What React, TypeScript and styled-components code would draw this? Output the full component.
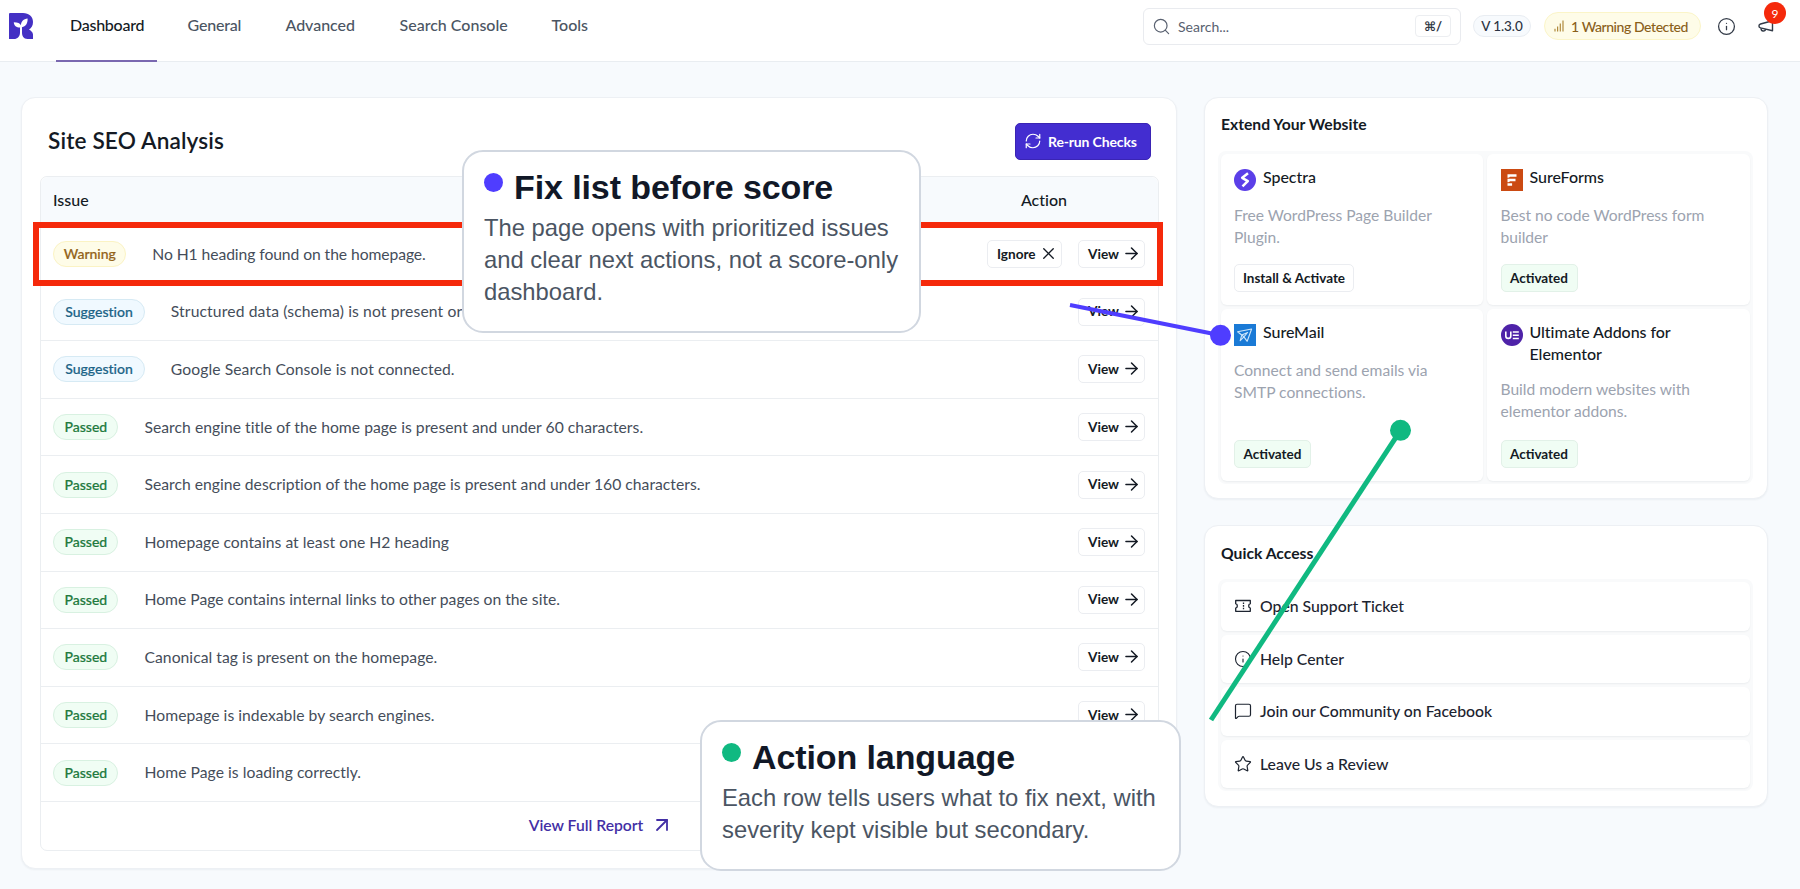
import React from "react";
import styled, { createGlobalStyle, css } from "styled-components";
import { ArrowRight, ArrowUpRight, Info, MessageSquare, RefreshCw, Search, Star, X } from "lucide-react";

const Global = createGlobalStyle`
  * { box-sizing: border-box; }
  body {
    margin: 0;
    background: #f7fafd;
    font-family: Lato, "Liberation Sans", sans-serif;
    font-variant-ligatures: none;
    color: #141a24;
    overflow: hidden;
  }
`;

const Page = styled.div`
  position: relative;
  width: 1800px;
  height: 889px;
  overflow: hidden;
`;

/* ---------- header ---------- */
const Header = styled.header`
  display: flex;
  align-items: flex-start;
  height: 62px;
  padding-left: 9px;
  background: #fff;
  border-bottom: 1px solid #e9edf1;
`;
const Logo = styled.svg`
  width: 24px;
  height: 26px;
  margin-top: 13px;
`;
const Nav = styled.nav`
  display: flex;
  gap: 16.5px;
  margin-left: 23px;
`;
const Tab = styled.a<{ $w: number; $active?: boolean; $track?: number }>`
  width: ${p => p.$w}px;
  height: 62px;
  padding: 14px 0 0 14px;
  white-space: nowrap;
  font-size: 16px;
  font-weight: 500;
  line-height: 22px;
  letter-spacing: ${p => p.$track ?? 0}px;
  color: ${p => (p.$active ? "#141a24" : "#4b5563")};
  border-bottom: 2px solid ${p => (p.$active ? "#7a68b0" : "transparent")};
`;
const Tools = styled.div`
  display: flex;
  align-items: center;
  height: 52px;
  margin-left: auto;
  padding-right: 26px;
`;
const SearchBox = styled.div`
  display: flex;
  align-items: center;
  gap: 7px;
  width: 318px;
  height: 37px;
  padding: 0 9px 0 8px;
  border: 1px solid #e9ebef;
  border-radius: 6px;
  color: #596170;
  font-size: 14px;
`;
const Key = styled.kbd`
  display: grid;
  place-items: center;
  width: 36px;
  height: 22px;
  margin-left: auto;
  border: 1px solid #eceef1;
  border-radius: 4px;
  color: #2f3744;
  font: 700 13px Lato, "DejaVu Sans", sans-serif;
`;
const Version = styled.span`
  display: grid;
  place-items: center;
  width: 58px;
  height: 22px;
  margin-left: 12px;
  border: 1px solid #e9edf2;
  border-radius: 11px;
  background: #f7fafd;
  color: #2b3342;
  font-size: 13.5px;
  font-weight: 500;
  letter-spacing: -0.1px;
`;
const Alert = styled.span`
  display: flex;
  align-items: center;
  width: 157px;
  height: 28px;
  margin-left: 13px;
  padding-left: 9px;
  gap: 7px;
  border: 1px solid #fbf5c8;
  border-radius: 14px;
  background: #fefce8;
  color: #8a601a;
  font-size: 14px;
  font-weight: 500;
  letter-spacing: -0.43px;
  white-space: nowrap;
`;
const HeaderIcon = styled.span<{ $left: number }>`
  position: relative;
  display: flex;
  margin-left: ${p => p.$left}px;
  color: #333b48;
`;
const Count = styled.span`
  position: absolute;
  left: 6px;
  top: -18px;
  display: grid;
  place-items: center;
  width: 22px;
  height: 22px;
  border-radius: 50%;
  background: #f5290b;
  color: #fff;
  font-size: 12px;
`;

/* ---------- layout ---------- */
const Main = styled.main`
  display: grid;
  grid-template-columns: 1156px 564px;
  gap: 26.5px;
  align-items: start;
  padding: 35px 0 0 21px;
`;
const Side = styled.aside`
  display: flex;
  flex-direction: column;
  gap: 26px;
`;
const Card = styled.section`
  background: #fff;
  border: 1px solid #edf0f4;
  border-radius: 14px;
  box-shadow: 0 1px 2px rgba(20, 30, 50, 0.05);
`;
const AnalysisCard = styled(Card)`
  height: 772px;
  padding: 25px 17px 0 18px;
`;
const AnalysisHead = styled.div`
  display: flex;
  align-items: center;
  justify-content: space-between;
  height: 37px;
  padding: 0 8px 0 8px;
`;
const AnalysisTitle = styled.h1`
  margin: -2px 0 0;
  font-size: 22.6px;
  font-weight: 600;
  line-height: 30px;
  letter-spacing: 0.15px;
`;
const PrimaryButton = styled.button`
  display: flex;
  align-items: center;
  gap: 6px;
  width: 136px;
  height: 37px;
  padding: 0 0 1px 8px;
  border: 1px solid #3a24b4;
  border-radius: 5px;
  background: #432dd0;
  color: #fff;
  font: 700 14px Lato, sans-serif;
  letter-spacing: -0.15px;
  white-space: nowrap;
`;
const Table = styled.div`
  margin-top: 16px;
  height: 675px;
  border: 1px solid #ebeef1;
  border-radius: 7px;
`;
const TableHead = styled.div`
  display: flex;
  justify-content: space-between;
  height: 49px;
  padding: 0 91px 0 12px;
  border-radius: 7px 7px 0 0;
  background: #f7fafd;
  font-size: 16px;
  font-weight: 500;
  line-height: 45px;
`;
const Row = styled.div`
  position: relative;
  display: flex;
  align-items: center;
  gap: 26px;
  height: 57.6px;
  padding: 0 13px 0 12.3px;
  border-bottom: 1px solid #ebeef1;
`;
const tones = {
  Warning: css`background: #fefce8; border-color: #fbf3c4; color: #93631a;`,
  Suggestion: css`background: #f0f9ff; border-color: #d6eaf4; color: #1c6487;`,
  Passed: css`background: #f0fdf4; border-color: #d8f1e1; color: #227a3e;`,
};
type Tone = keyof typeof tones;
const toneWidths: Record<Tone, number> = { Warning: 73, Suggestion: 91.5, Passed: 65.2 };
const Badge = styled.span<{ $tone: Tone }>`
  width: ${p => toneWidths[p.$tone]}px;
  height: 26px;
  border: 1px solid;
  border-radius: 13px;
  font-size: 14px;
  font-weight: 500;
  line-height: 23px;
  text-align: center;
  -webkit-text-stroke: 0.2px currentColor;
  ${p => tones[p.$tone]}
`;
const IssueText = styled.span<{ $track?: number }>`
  flex: 1;
  padding-bottom: 1px;
  font-size: 15.7px;
  line-height: 22px;
  letter-spacing: ${p => p.$track ?? 0}px;
  color: #454d5a;
`;
const Actions = styled.div`
  display: flex;
  gap: 16px;
`;
const GhostButton = styled.button<{ $w: number }>`
  display: flex;
  align-items: center;
  justify-content: space-between;
  width: ${p => p.$w}px;
  height: 28px;
  padding: 0 3px 1px 9px;
  border: 1px solid #ebedf1;
  border-radius: 5px;
  background: #fff;
  color: #141a24;
  font: 700 13.6px Lato, sans-serif;
`;
const Highlight = styled.div`
  position: absolute;
  left: -8px;
  right: -5px;
  top: -4px;
  height: 64px;
  border: 6.5px solid #f5290b;
`;
const ReportLink = styled.a`
  display: flex;
  align-items: center;
  justify-content: center;
  gap: 7px;
  height: 48px;
  padding: 0 0 1px 4px;
  color: #432fa5;
  font-size: 15.7px;
  font-weight: 600;
`;

/* ---------- side panels ---------- */
const PanelTitle = styled.h2`
  margin: 0 0 0 3.5px;
  font-size: 15.7px;
  font-weight: 700;
  line-height: 22px;
`;
const ExtendCard = styled(Card)`
  height: 402px;
  padding: 15px 14px 0 13px;
`;
const Tiles = styled.div`
  display: grid;
  grid-template-columns: 1fr 1fr;
  grid-template-rows: 151px 172px;
  gap: 4px;
  margin-top: 16px;
  padding: 3px;
  border-radius: 8px;
  background: #f9fafb;
`;
const Tile = styled.article`
  display: grid;
  grid-template-columns: 22px 1fr;
  grid-template-rows: auto auto 1fr;
  column-gap: 7px;
  padding: 15px 13px 13px 13.5px;
  border-radius: 6px;
  background: #fff;
  box-shadow: 0 1px 2px rgba(20, 30, 50, 0.06);
`;
const TileIcon = styled.svg`
  width: 22px;
  height: 22px;
`;
const TileTitle = styled.h3`
  width: 150px;
  margin: -3px 0 0;
  font-size: 16px;
  font-weight: 500;
  line-height: 22px;
  letter-spacing: -0.05px;
`;
const TileText = styled.p`
  grid-column: 1 / -1;
  width: 210px;
  margin: 13px 0 0;
  font-size: 15.6px;
  line-height: 22px;
  color: #9ca3af;
`;
const TileButton = styled.button<{ $on?: boolean }>`
  grid-column: 1 / -1;
  align-self: end;
  justify-self: start;
  width: ${p => (p.$on ? 77 : 120)}px;
  height: 28px;
  padding: 0 0 1px;
  border: 1px solid ${p => (p.$on ? "#e2f1e8" : "#ebedf1")};
  border-radius: 5px;
  background: ${p => (p.$on ? "#f0fdf4" : "#fff")};
  color: #141a24;
  font: 700 13.5px Lato, sans-serif;
  white-space: nowrap;
`;
const QuickCard = styled(Card)`
  height: 282px;
  padding: 16px 14px 0 13px;
`;
const Links = styled.div`
  display: flex;
  flex-direction: column;
  gap: 4px;
  margin-top: 15px;
  padding: 3px;
  border-radius: 8px;
  background: #f9fafb;
`;
const LinkRow = styled.a`
  display: flex;
  align-items: center;
  gap: 8px;
  height: 48.6px;
  padding-left: 13.5px;
  border-radius: 6px;
  background: #fff;
  box-shadow: 0 1px 2px rgba(20, 30, 50, 0.06);
  color: #1d2430;
  font-size: 15.8px;
  font-weight: 500;
`;
const LinkLabel = styled.span`
  padding-bottom: 1px;
`;

/* ---------- annotations ---------- */
const Callout = styled.div<{ $x: number; $y: number; $w: number; $h: number }>`
  position: absolute;
  left: ${p => p.$x}px;
  top: ${p => p.$y}px;
  width: ${p => p.$w}px;
  height: ${p => p.$h}px;
  padding: 16px 0 0 20px;
  border: 2px solid #d1d7e0;
  border-radius: 21px;
  background: #fff;
  font-family: "Liberation Sans", Arial, sans-serif;
`;
const CalloutHead = styled.div`
  display: flex;
  gap: 11px;
`;
const Dot = styled.i<{ $color: string }>`
  width: 19px;
  height: 19px;
  margin-top: 5px;
  border-radius: 50%;
  background: ${p => p.$color};
`;
const CalloutTitle = styled.h4`
  margin: 0;
  font-size: 34px;
  font-weight: 700;
  line-height: 38px;
  letter-spacing: -0.1px;
  color: #111827;
`;
const CalloutText = styled.p`
  margin: 6px 0 0;
  font-size: 23.8px;
  line-height: 32px;
  color: #4b5563;
  white-space: nowrap;
`;
const Connectors = styled.svg`
  position: absolute;
  left: 0;
  top: 0;
  width: 1800px;
  height: 889px;
  pointer-events: none;
`;

const BLUE = "#4f3dff";
const GREEN = "#10b981";

const issues: { tone: Tone; text: string; ignorable?: boolean; track?: number }[] = [
  { tone: "Warning", text: "No H1 heading found on the homepage.", ignorable: true, track: -0.08 },
  { tone: "Suggestion", text: "Structured data (schema) is not present or invalid.", track: 0.12 },
  { tone: "Suggestion", text: "Google Search Console is not connected.", track: 0.08 },
  { tone: "Passed", text: "Search engine title of the home page is present and under 60 characters.", track: 0.03 },
  { tone: "Passed", text: "Search engine description of the home page is present and under 160 characters.", track: 0.01 },
  { tone: "Passed", text: "Homepage contains at least one H2 heading", track: 0.03 },
  { tone: "Passed", text: "Home Page contains internal links to other pages on the site." },
  { tone: "Passed", text: "Canonical tag is present on the homepage.", track: 0.04 },
  { tone: "Passed", text: "Homepage is indexable by search engines.", track: 0.04 },
  { tone: "Passed", text: "Home Page is loading correctly.", track: 0.04 },
];

const SpectraIcon = () => (
  <TileIcon viewBox="0 0 22 22">
    <circle cx="11" cy="11" r="11" fill="#5b3fe8" />
    <path d="M14 4.300 8.200 8.800l5.600 3.300-5.300 5.200" fill="none" stroke="#fff" strokeWidth="2.500" strokeLinejoin="round" />
  </TileIcon>
);
const FormsIcon = () => (
  <TileIcon viewBox="0 0 22 22">
    <rect width="22" height="22" fill="#cb4a12" />
    <path d="M6.500 5.200h9v2.600H9a2.500 2.500 0 0 1-2.500 1zM6.500 9.700h8v2.500H9a2.500 2.500 0 0 1-2.500 1zM6.500 14.200h4.600v2.600H6.500z" fill="#fff" />
  </TileIcon>
);
const MailIcon = () => (
  <TileIcon viewBox="0 0 22 22" fill="none" stroke="#cfe6fa" strokeWidth="1.100" strokeLinejoin="round">
    <rect width="22" height="22" fill="#1a7ad6" stroke="none" />
    <path d="M3.600 7.800 17.600 5l-4.400 12.300-3.300-4.500zM9.900 12.800l3.700-4.300-5.800 2.600M7.800 11.100l-1.600 5.600 3.700-3.900" />
  </TileIcon>
);
const AddonsIcon = () => (
  <TileIcon viewBox="0 0 22 22">
    <circle cx="11" cy="11" r="11" fill="#4e22a8" />
    <path d="M4.800 7.400v4.500a2.500 2.500 0 0 0 5 0V7.400" fill="none" stroke="#fff" strokeWidth="1.600" />
    <path d="M11.800 8h6M11.800 11.200h6M11.800 14.400h6" stroke="#fff" strokeWidth="1.500" />
  </TileIcon>
);

const tiles = [
  { Icon: SpectraIcon, name: "Spectra", text: "Free WordPress Page Builder Plugin.", on: false },
  { Icon: FormsIcon, name: "SureForms", text: "Best no code WordPress form builder", on: true },
  { Icon: MailIcon, name: "SureMail", text: "Connect and send emails via SMTP connections.", on: true },
  { Icon: AddonsIcon, name: "Ultimate Addons for Elementor", text: "Build modern websites with elementor addons.", on: true },
];

const TicketIcon = () => (
  <svg width="18" height="18" viewBox="-1 -1 18 18" fill="none" stroke="currentColor" strokeWidth="1.300" strokeLinejoin="round">
    <path d="M.7 2.500h14.600v3.200a2.300 2.300 0 0 0 0 4.400v3.200H.7v-3.200a2.300 2.300 0 0 0 0-4.400z" />
    <path d="M8.500 4.600v1.500M8.500 7.100v1.600M8.500 9.700v1.500" />
  </svg>
);
const MegaphoneIcon = () => (
  <svg width="16" height="12" viewBox="0 0 16 12" fill="none" stroke="currentColor" strokeWidth="1.400" strokeLinejoin="round">
    <path d="M14.500.8v10L2.600 7.900C.4 7.300.4 4.600 2.500 4z" />
    <path d="M3 8.200c0 3.400 4.200 3.800 4.600 1" />
  </svg>
);

const quickLinks = [
  { icon: <TicketIcon />, text: "Open Support Ticket" },
  { icon: <Info size={18} strokeWidth={1.5} />, text: "Help Center" },
  { icon: <MessageSquare size={18} strokeWidth={1.6} />, text: "Join our Community on Facebook" },
  { icon: <Star size={18} strokeWidth={1.6} />, text: "Leave Us a Review" },
];

export default function App() {
  return (
    <Page>
      <Global />
      <Header>
        <Logo viewBox="0 0 24 26">
          <path d="M1 0h13c6 0 10 3.600 10 9 0 3.500-1.500 6-4 7.500 1.500 1 4 2.500 4 5V26h-5.500c-4 0-5.500-3-5.500-6.500V17h-2v2.500C11 23.500 8.500 26 5 26H0V1a1 1 0 0 1 1-1z" fill="#4430c4" />
          <path d="M4.800 9.200c4 0 6.300 1 7.100 3 .3-3.600 2.600-6.300 6.700-6.600.3 5-2 8-5.600 8.600v3.300h-2v-3c-3.700 0-6-1.700-6.200-5.300z" fill="#fff" />
        </Logo>
        <Nav>
          <Tab $w={101} $active $track={-0.25}>Dashboard</Tab>
          <Tab $w={81.5} $track={-0.2}>General</Tab>
          <Tab $w={97.5} $track={-0.05}>Advanced</Tab>
          <Tab $w={135.5}>Search Console</Tab>
          <Tab $w={64}>Tools</Tab>
        </Nav>
        <Tools>
          <SearchBox>
            <Search size={19} strokeWidth={1.5} />
            Search...
            <Key>⌘/</Key>
          </SearchBox>
          <Version>V 1.3.0</Version>
          <Alert>
            <svg width="10" height="12" viewBox="0 0 10 12" stroke="#b08a3c" strokeWidth="1.200">
              <path d="M1 11.500V8.800M3.600 11.500V6.500M6.300 11.500V3.500M9 11.500V.5" />
            </svg>
            1 Warning Detected
          </Alert>
          <HeaderIcon $left={16}><Info size={19} strokeWidth={1.6} /></HeaderIcon>
          <HeaderIcon $left={22}>
            <MegaphoneIcon />
            <Count>9</Count>
          </HeaderIcon>
        </Tools>
      </Header>

      <Main>
        <AnalysisCard>
          <AnalysisHead>
            <AnalysisTitle>Site SEO Analysis</AnalysisTitle>
            <PrimaryButton><RefreshCw size={18} strokeWidth={1.6} />Re-run Checks</PrimaryButton>
          </AnalysisHead>
          <Table>
            <TableHead><span>Issue</span><span>Action</span></TableHead>
            {issues.map(({ tone, text, ignorable, track }) => (
              <Row key={text}>
                <Badge $tone={tone}>{tone}</Badge>
                <IssueText $track={track}>{text}</IssueText>
                <Actions>
                  {ignorable && <GhostButton $w={75}>Ignore<X size={19} strokeWidth={1.7} /></GhostButton>}
                  <GhostButton $w={67}>View<ArrowRight size={19} strokeWidth={1.9} /></GhostButton>
                </Actions>
                {ignorable && <Highlight />}
              </Row>
            ))}
            <ReportLink>View Full Report<ArrowUpRight size={24} strokeWidth={1.8} /></ReportLink>
          </Table>
        </AnalysisCard>

        <Side>
          <ExtendCard>
            <PanelTitle>Extend Your Website</PanelTitle>
            <Tiles>
              {tiles.map(({ Icon, name, text, on }) => (
                <Tile key={name}>
                  <Icon />
                  <TileTitle>{name}</TileTitle>
                  <TileText>{text}</TileText>
                  <TileButton $on={on}>{on ? "Activated" : "Install & Activate"}</TileButton>
                </Tile>
              ))}
            </Tiles>
          </ExtendCard>
          <QuickCard>
            <PanelTitle>Quick Access</PanelTitle>
            <Links>
              {quickLinks.map(({ icon, text }) => <LinkRow key={text}>{icon}<LinkLabel>{text}</LinkLabel></LinkRow>)}
            </Links>
          </QuickCard>
        </Side>
      </Main>

      <Connectors>
        <path d="M1070 305 1220.500 335.300" stroke={BLUE} strokeWidth="4" />
        <circle cx="1220.500" cy="335.300" r="10.500" fill={BLUE} />
        <path d="M1211 720 1400.500 430.300" stroke={GREEN} strokeWidth="5" />
        <circle cx="1400.500" cy="430.300" r="10.500" fill={GREEN} />
      </Connectors>
      <Callout $x={462} $y={150} $w={459} $h={183}>
        <CalloutHead><Dot $color={BLUE} /><CalloutTitle>Fix list before score</CalloutTitle></CalloutHead>
        <CalloutText>
          The page opens with prioritized issues<br />and clear next actions, not a score-only<br />dashboard.
        </CalloutText>
      </Callout>
      <Callout $x={700} $y={720} $w={481} $h={151}>
        <CalloutHead><Dot $color={GREEN} /><CalloutTitle>Action language</CalloutTitle></CalloutHead>
        <CalloutText>
          Each row tells users what to fix next, with<br />severity kept visible but secondary.
        </CalloutText>
      </Callout>
    </Page>
  );
}
